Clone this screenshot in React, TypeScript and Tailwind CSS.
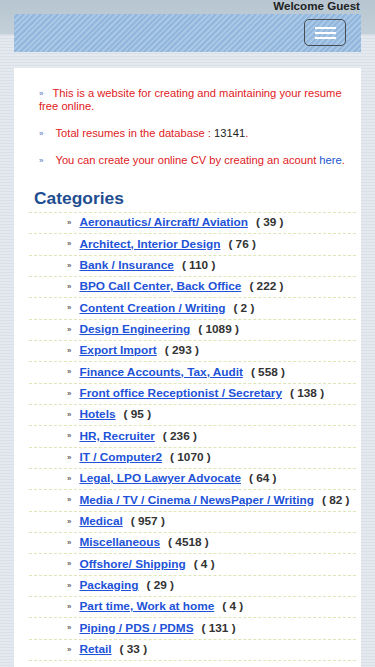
import React from 'react';

interface Category {
    name: string;
    count: number;
}

const CATEGORIES: Category[] = [
    { name: 'Aeronautics/ Aircraft/ Aviation', count: 39 },
    { name: 'Architect, Interior Design', count: 76 },
    { name: 'Bank / Insurance', count: 110 },
    { name: 'BPO Call Center, Back Office', count: 222 },
    { name: 'Content Creation / Writing', count: 2 },
    { name: 'Design Engineering', count: 1089 },
    { name: 'Export Import', count: 293 },
    { name: 'Finance Accounts, Tax, Audit', count: 558 },
    { name: 'Front office Receptionist / Secretary', count: 138 },
    { name: 'Hotels', count: 95 },
    { name: 'HR, Recruiter', count: 236 },
    { name: 'IT / Computer2', count: 1070 },
    { name: 'Legal, LPO Lawyer Advocate', count: 64 },
    { name: 'Media / TV / Cinema / NewsPaper / Writing', count: 82 },
    { name: 'Medical', count: 957 },
    { name: 'Miscellaneous', count: 4518 },
    { name: 'Offshore/ Shipping', count: 4 },
    { name: 'Packaging', count: 29 },
    { name: 'Part time, Work at home', count: 4 },
    { name: 'Piping / PDS / PDMS', count: 131 },
    { name: 'Retail', count: 33 },
];

const Bullet: React.FC<{ className?: string }> = ({ className = '' }) => (
    <span className={`inline-block align-middle text-[8px] leading-[8px] text-[#4a6fb5] ${className}`}>»</span>
);

const App: React.FC = () => {
    return (
        <div className="min-h-screen font-['Liberation_Sans',Arial,sans-serif] bg-[linear-gradient(180deg,#b6c5d0_0px,#c4d0d9_34px,transparent_35px),repeating-linear-gradient(180deg,#e4e9ef_0px,#e4e9ef_2px,#d9e0e7_2px,#d9e0e7_3px)] px-[14px]">
            {/* top line */}
            <div className="h-[14px] text-right pr-[1px] text-[11.6px] leading-[12px] font-bold text-[#222]">
                Welcome Guest
            </div>

            {/* header bar */}
            <header className="h-[38px] flex justify-end items-start pt-[5px] pr-[15px] bg-[repeating-linear-gradient(135deg,#a8c8e5_0px,#a8c8e5_2px,#93b7dc_2px,#93b7dc_4px)]">
                <button className="w-[42px] h-[27px] rounded-[5px] border-[1.5px] border-[#464c52] flex flex-col items-center justify-center gap-[3px]" aria-label="Menu">
                    <span className="block w-[21px] h-[2px] bg-white" />
                    <span className="block w-[21px] h-[2px] bg-white" />
                    <span className="block w-[21px] h-[2px] bg-white" />
                </button>
            </header>

            {/* content card */}
            <main className="mt-[16px] bg-white pt-[19px] pb-[20px]">
                <div className="pl-[25px] pr-[8px] text-[11.2px] leading-[12.5px] text-[#e0201c]">
                    <p>
                        <Bullet className="mr-[9px]" />This is a website for creating and maintaining your resume free online.
                    </p>
                    <p className="mt-[15px]">
                        <Bullet className="mr-[12px]" />Total resumes in the database : <span className="text-[#222]">13141</span>.
                    </p>
                    <p className="mt-[14px]">
                        <Bullet className="mr-[12px]" />You can create your online CV by creating an acount <a href="#" className="text-[#2255cc]">here</a>.
                    </p>
                </div>

                <section className="ml-[15px] mr-[5px] mt-[22px]">
                    <h2 className="pl-[5px] pb-[4px] text-[17.4px] leading-[20px] font-bold text-[#1f4d91] border-b border-dashed border-[#dfe5b6]">
                        Categories
                    </h2>
                    <ul>
                        {CATEGORIES.map((c) => (
                            <li key={c.name} className="h-[21.33px] flex items-center pl-[38px] border-b border-dashed border-[#dfe5b6] text-[11.8px] font-bold whitespace-nowrap">
                                <Bullet className="text-[#666] mr-[8px]" />
                                <a href="#" className="text-[#2152d8] underline underline-offset-[1px]">{c.name}</a>
                                <span className="ml-[8px] text-[#333]">( {c.count} )</span>
                            </li>
                        ))}
                    </ul>
                </section>
            </main>
        </div>
    );
};

export default App;
